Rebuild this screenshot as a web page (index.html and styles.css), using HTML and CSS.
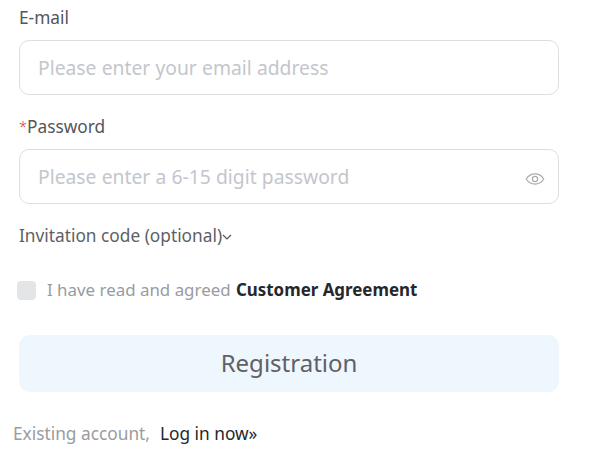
FILE: index.html
```html
<!DOCTYPE html>
<html lang="en">
<head>
    <meta charset="UTF-8">
    <title>Registration</title>
    <link rel="stylesheet" href="styles.css">
</head>
<body>
    <div class="form">
        <label class="label">E-mail</label>
        <div class="input-box">
            <span class="placeholder">Please enter your email address</span>
        </div>

        <label class="label label-password"><span class="star">*</span>Password</label>
        <div class="input-box">
            <span class="placeholder">Please enter a 6-15 digit password</span>
            <svg class="eye" viewBox="0 0 20 20" width="20" height="20" fill="none" stroke="#a9abaf" stroke-width="1.2">
                <path d="M1.2 10C3.4 6.6 6.4 4.900 10 4.900s6.600 1.700 8.800 5.100C16.600 13.400 13.600 15.100 10 15.100S3.400 13.400 1.200 10z"/>
                <circle cx="10" cy="10" r="2.600"/>
            </svg>
        </div>

        <div class="invite">
            <span>Invitation code (optional)</span>
            <svg class="chevron" viewBox="0 0 10 10" width="10" height="10" fill="none" stroke="#55575c" stroke-width="1.200">
                <path d="M1 3l4 4 4-4"/>
            </svg>
        </div>

        <div class="agree">
            <span class="checkbox"></span>
            <span class="agree-text">I have read and agreed <b>Customer Agreement</b></span>
        </div>

        <button class="submit">Registration</button>

        <div class="login">
            <span class="login-hint">Existing account,</span>
            <a class="login-link">Log in now»</a>
        </div>
    </div>
</body>
</html>
```

FILE: styles.css
```css
body {
    margin: 0;
    background: #fff;
    font-family: "Noto Sans", "Open Sans", sans-serif;
    overflow: hidden;
}

.form {
    width: 540px;
    margin-left: 19px;
    padding-top: 6px;
}

.label {
    display: block;
    font-size: 17.3px;
    line-height: 24px;
    color: #54565b;
}

.label-password {
    margin-top: 20px;
}

.star {
    color: #d9303e;
    font-size: 14.5px;
    font-weight: 300;
    line-height: 1;
    vertical-align: 1px;
}

.input-box {
    height: 53px;
    margin-top: 10px;
    border: 1px solid #dcdee2;
    border-radius: 10px;
    display: flex;
    align-items: center;
    justify-content: space-between;
    padding: 0 13px 0 18px;
}

.placeholder {
    font-size: 19.3px;
    word-spacing: 0.2px;
    color: #c3c6cd;
}

.eye {
    margin-top: 5px;
}

.invite {
    display: flex;
    align-items: center;
    gap: 0;
    margin-top: 20px;
    font-size: 17.3px;
    line-height: 24px;
    color: #5d5f64;
}

.chevron {
    margin-top: 2px;
}

.agree {
    display: flex;
    align-items: center;
    margin: 30px 0 0 -2px;
    font-size: 16.900px;
    line-height: 24px;
}

.checkbox {
    width: 19px;
    height: 19px;
    margin-right: 11px;
    border-radius: 4px;
    background: #e3e5e6;
}

.agree-text {
    color: #999b9f;
}

.agree-text b {
    margin-left: 1px;
    color: #25272b;
}

.submit {
    display: block;
    width: 100%;
    height: 57px;
    margin-top: 33px;
    padding: 0 6px 2px;
    border: none;
    border-radius: 11px;
    background: #eef6fe;
    color: #5f6166;
    font-family: inherit;
    font-size: 24px;
}

.login {
    display: flex;
    gap: 10px;
    margin: 30px 0 0 -6px;
    font-size: 17.3px;
    line-height: 24px;
}

.login-hint {
    color: #999b9f;
}

.login-link {
    color: #25272b;
}
```
